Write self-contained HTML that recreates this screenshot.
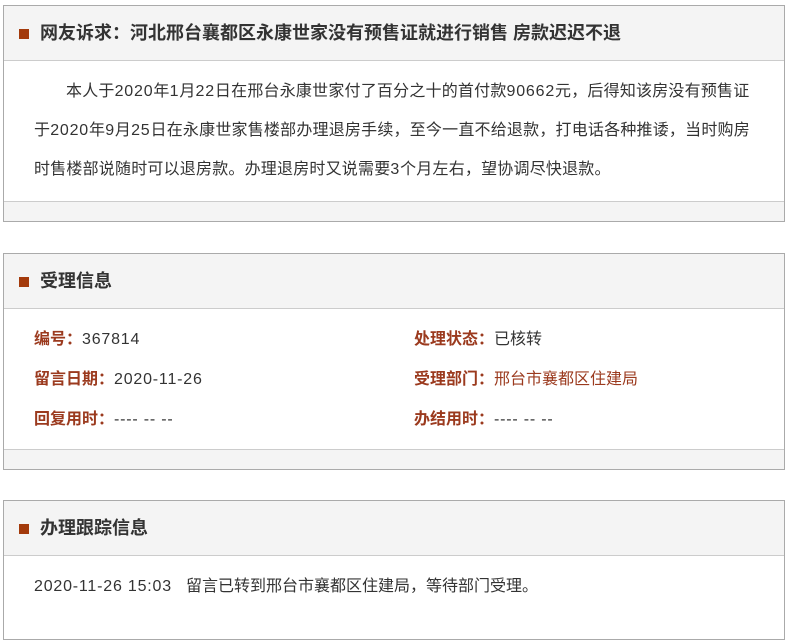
<!DOCTYPE html>
<html><head><meta charset="utf-8"><style>
*{margin:0;padding:0;box-sizing:border-box}
body{width:790px;height:623px;overflow:hidden;background:#fff;font-family:"Liberation Sans","Noto Sans CJK SC",sans-serif;color:#333}
.box{position:absolute;left:3px;width:782px;border:1px solid #aaa;background:#fff}
.hd{height:55px;background:#f4f4f4;border-bottom:1px solid #ccc;position:relative;font-size:18px;font-weight:bold;color:#333;line-height:55px;padding-left:36px}
.hd:before{content:"";position:absolute;left:15px;top:23px;width:10px;height:10px;background:#a33a0b}
.ft{height:20px;background:#f4f4f4;border-top:1px solid #ccc}
.p{font-size:16px;line-height:39px;padding:11px 0 10px 30px;white-space:nowrap;letter-spacing:0.2px}
.row{font-size:16px;height:40px;line-height:40px;position:relative}
.row span{position:absolute;white-space:nowrap}
.n{letter-spacing:0.8px}
b{color:#9b3a1e}
.red{color:#9b3a1e}
</style></head><body>
<div class="box" style="top:5px">
<div class="hd">网友诉求：河北邢台襄都区永康世家没有预售证就进行销售 房款迟迟不退</div>
<div class="p" style="height:140px"><span style="padding-left:32px"></span>本人于<span class="n">2020</span>年<span class="n">1</span>月<span class="n">22</span>日在邢台永康世家付了百分之十的首付款<span class="n">90662</span>元，后得知该房没有预售证<br>于<span class="n">2020</span>年<span class="n">9</span>月<span class="n">25</span>日在永康世家售楼部办理退房手续，至今一直不给退款，打电话各种推诿，当时购房<br>时售楼部说随时可以退房款。办理退房时又说需要<span class="n">3</span>个月左右，望协调尽快退款。</div>
<div class="ft"></div>
</div>
<div class="box" style="top:253px">
<div class="hd">受理信息</div>
<div style="height:140px;padding-top:11px">
<div class="row"><span style="left:30px"><b>编号：</b><span class="n" style="position:static">367814</span></span><span style="left:410px"><b>处理状态：</b>已核转</span></div>
<div class="row"><span style="left:30px"><b>留言日期：</b><span class="n" style="position:static">2020-11-26</span></span><span style="left:410px"><b>受理部门：</b><span class="red" style="position:static">邢台市襄都区住建局</span></span></div>
<div class="row"><span style="left:30px"><b>回复用时：</b><span class="n" style="position:static">---- -- --</span></span><span style="left:410px"><b>办结用时：</b><span class="n" style="position:static">---- -- --</span></span></div>
</div>
<div class="ft"></div>
</div>
<div class="box" style="top:500px;height:140px">
<div class="hd">办理跟踪信息</div>
<div class="row" style="margin-top:11px"><span style="left:30px" class="n">2020-11-26 15:03</span><span style="left:182px">留言已转到邢台市襄都区住建局，等待部门受理。</span></div>
</div>
</body></html>
